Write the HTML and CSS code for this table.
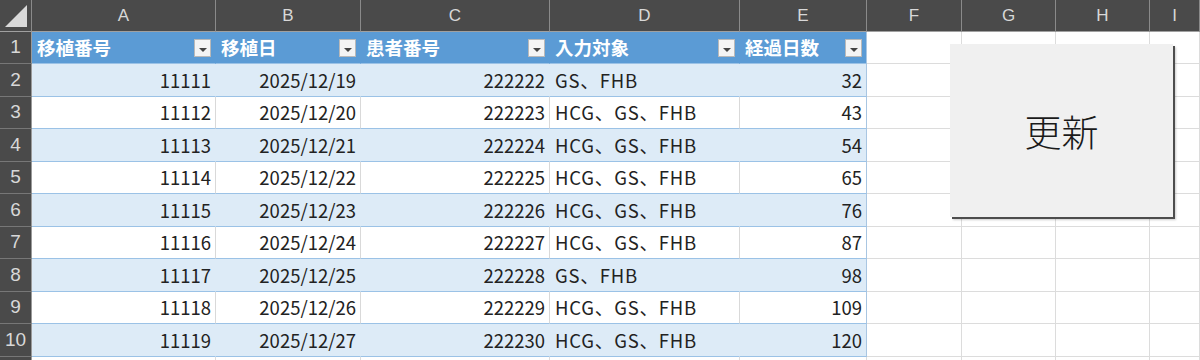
FILE: index.html
```html
<!DOCTYPE html>
<html lang="ja">
<head>
<meta charset="utf-8">
<title>Sheet</title>
<link rel="stylesheet" href="styles.css">
</head>
<body>
<div class="sheet">
  <div class="row colheads">
    <div class="corner"><svg width="31" height="31" viewBox="0 0 31 31"><polygon points="27,5 27,27 5,27" fill="#d9d9d9"/></svg></div>
    <div class="ch">A</div><div class="ch">B</div><div class="ch">C</div><div class="ch">D</div><div class="ch">E</div><div class="ch">F</div><div class="ch">G</div><div class="ch">H</div><div class="ch">I</div>
  </div>
  <div class="row">
    <div class="rh">1</div>
    <div class="c th"><span>移植番号</span><i class="fb"></i></div>
    <div class="c th"><span>移植日</span><i class="fb"></i></div>
    <div class="c th"><span>患者番号</span><i class="fb"></i></div>
    <div class="c th"><span>入力対象</span><i class="fb"></i></div>
    <div class="c th last"><span>経過日数</span><i class="fb"></i></div>
    <div class="g"></div><div class="g"></div><div class="g"></div><div class="g"></div>
  </div>
  <div class="row band">
    <div class="rh">2</div>
    <div class="c n">11111</div><div class="c n">2025/12/19</div><div class="c n">222222</div><div class="c t">GS、FHB</div><div class="c n last">32</div>
    <div class="g"></div><div class="g"></div><div class="g"></div><div class="g"></div>
  </div>
  <div class="row">
    <div class="rh">3</div>
    <div class="c n">11112</div><div class="c n">2025/12/20</div><div class="c n">222223</div><div class="c t">HCG、GS、FHB</div><div class="c n last">43</div>
    <div class="g"></div><div class="g"></div><div class="g"></div><div class="g"></div>
  </div>
  <div class="row band">
    <div class="rh">4</div>
    <div class="c n">11113</div><div class="c n">2025/12/21</div><div class="c n">222224</div><div class="c t">HCG、GS、FHB</div><div class="c n last">54</div>
    <div class="g"></div><div class="g"></div><div class="g"></div><div class="g"></div>
  </div>
  <div class="row">
    <div class="rh">5</div>
    <div class="c n">11114</div><div class="c n">2025/12/22</div><div class="c n">222225</div><div class="c t">HCG、GS、FHB</div><div class="c n last">65</div>
    <div class="g"></div><div class="g"></div><div class="g"></div><div class="g"></div>
  </div>
  <div class="row band">
    <div class="rh">6</div>
    <div class="c n">11115</div><div class="c n">2025/12/23</div><div class="c n">222226</div><div class="c t">HCG、GS、FHB</div><div class="c n last">76</div>
    <div class="g"></div><div class="g"></div><div class="g"></div><div class="g"></div>
  </div>
  <div class="row">
    <div class="rh">7</div>
    <div class="c n">11116</div><div class="c n">2025/12/24</div><div class="c n">222227</div><div class="c t">HCG、GS、FHB</div><div class="c n last">87</div>
    <div class="g"></div><div class="g"></div><div class="g"></div><div class="g"></div>
  </div>
  <div class="row band">
    <div class="rh">8</div>
    <div class="c n">11117</div><div class="c n">2025/12/25</div><div class="c n">222228</div><div class="c t">GS、FHB</div><div class="c n last">98</div>
    <div class="g"></div><div class="g"></div><div class="g"></div><div class="g"></div>
  </div>
  <div class="row">
    <div class="rh">9</div>
    <div class="c n">11118</div><div class="c n">2025/12/26</div><div class="c n">222229</div><div class="c t">HCG、GS、FHB</div><div class="c n last">109</div>
    <div class="g"></div><div class="g"></div><div class="g"></div><div class="g"></div>
  </div>
  <div class="row band">
    <div class="rh">10</div>
    <div class="c n">11119</div><div class="c n">2025/12/27</div><div class="c n">222230</div><div class="c t">HCG、GS、FHB</div><div class="c n last">120</div>
    <div class="g"></div><div class="g"></div><div class="g"></div><div class="g"></div>
  </div>
  <div class="row">
    <div class="rh"></div>
    <div class="g"></div><div class="g"></div><div class="g"></div><div class="g"></div><div class="g"></div>
    <div class="g"></div><div class="g"></div><div class="g"></div><div class="g"></div>
  </div>
  <button class="btn" type="button">更新</button>
</div>
</body>
</html>
```
FILE: styles.css
```css
html, body {
  margin: 0;
  padding: 0;
  background: #ffffff;
  overflow: hidden;
}

.sheet {
  position: relative;
  width: 1200px;
  height: 360px;
  overflow: hidden;
  font-family: "Noto Sans CJK JP", "Noto Sans", sans-serif;
  color: #222222;
}

.row {
  display: grid;
  grid-template-columns: 32px 184px 145px 189px 190px 127px 95px 94px 94px 50px;
  height: 32.5px;
}

.colheads {
  height: 31.5px;
}

.corner {
  background: #4a4a4a;
  border-right: 1px solid #8a8a8a;
  border-bottom: 1px solid #a0a0a0;
  box-sizing: border-box;
  display: flex;
  align-items: flex-start;
}

.ch {
  background: #4a4a4a;
  color: #d8d8d8;
  font-family: "Liberation Sans", "Open Sans", sans-serif;
  font-size: 17px;
  display: flex;
  align-items: center;
  justify-content: center;
  border-right: 1px solid #8a8a8a;
  border-bottom: 1px solid #a0a0a0;
  box-sizing: border-box;
}

.rh {
  background: #4a4a4a;
  color: #d8d8d8;
  font-family: "Liberation Sans", "Open Sans", sans-serif;
  font-size: 19px;
  display: flex;
  align-items: center;
  justify-content: center;
  border-right: 1px solid #9a9a9a;
  border-bottom: 1px solid #777777;
  box-sizing: border-box;
}

.c {
  box-sizing: border-box;
  border-bottom: 1px solid #9bc2e6;
  border-right: 1px solid #d9d9d9;
  display: flex;
  align-items: center;
  font-size: 18.5px;
  white-space: nowrap;
  overflow: hidden;
}

.band .c {
  background: #ddebf7;
  border-right-color: #ddebf7;
}

.c.last {
  border-right-color: #a9c6e2;
}

.n {
  justify-content: flex-end;
  padding-right: 4px;
}

.t {
  padding-left: 5px;
  letter-spacing: 0.8px;
}

.th {
  background: #5b9bd5;
  color: #ffffff;
  font-weight: 700;
  padding-left: 5px;
  padding-right: 4px;
  border-right-color: #5b9bd5;
  justify-content: space-between;
}

.th.last {
  border-right-color: #a9c6e2;
}

.fb {
  width: 17px;
  height: 18px;
  box-sizing: border-box;
  background: #f4f4f4;
  border: 1px solid #b9b9b9;
  position: relative;
  flex: none;
  margin-top: 1px;
}

.fb::after {
  content: "";
  position: absolute;
  left: 4px;
  top: 8px;
  border-left: 4px solid transparent;
  border-right: 4px solid transparent;
  border-top: 4px solid #444444;
}

.g {
  box-sizing: border-box;
  border-right: 1px solid #dcdcdc;
  border-bottom: 1px solid #dcdcdc;
}

.btn {
  position: absolute;
  left: 950px;
  top: 44px;
  width: 223px;
  height: 173px;
  margin: 0;
  padding: 0;
  border: none;
  background: #f0f0f0;
  box-shadow: 2px 2px 0 #4d4d4d, 3px 3px 2px rgba(0, 0, 0, 0.2);
  font-family: "Noto Sans CJK JP", sans-serif;
  font-weight: 300;
  font-size: 37px;
  color: #1a1a1a;
}
```
